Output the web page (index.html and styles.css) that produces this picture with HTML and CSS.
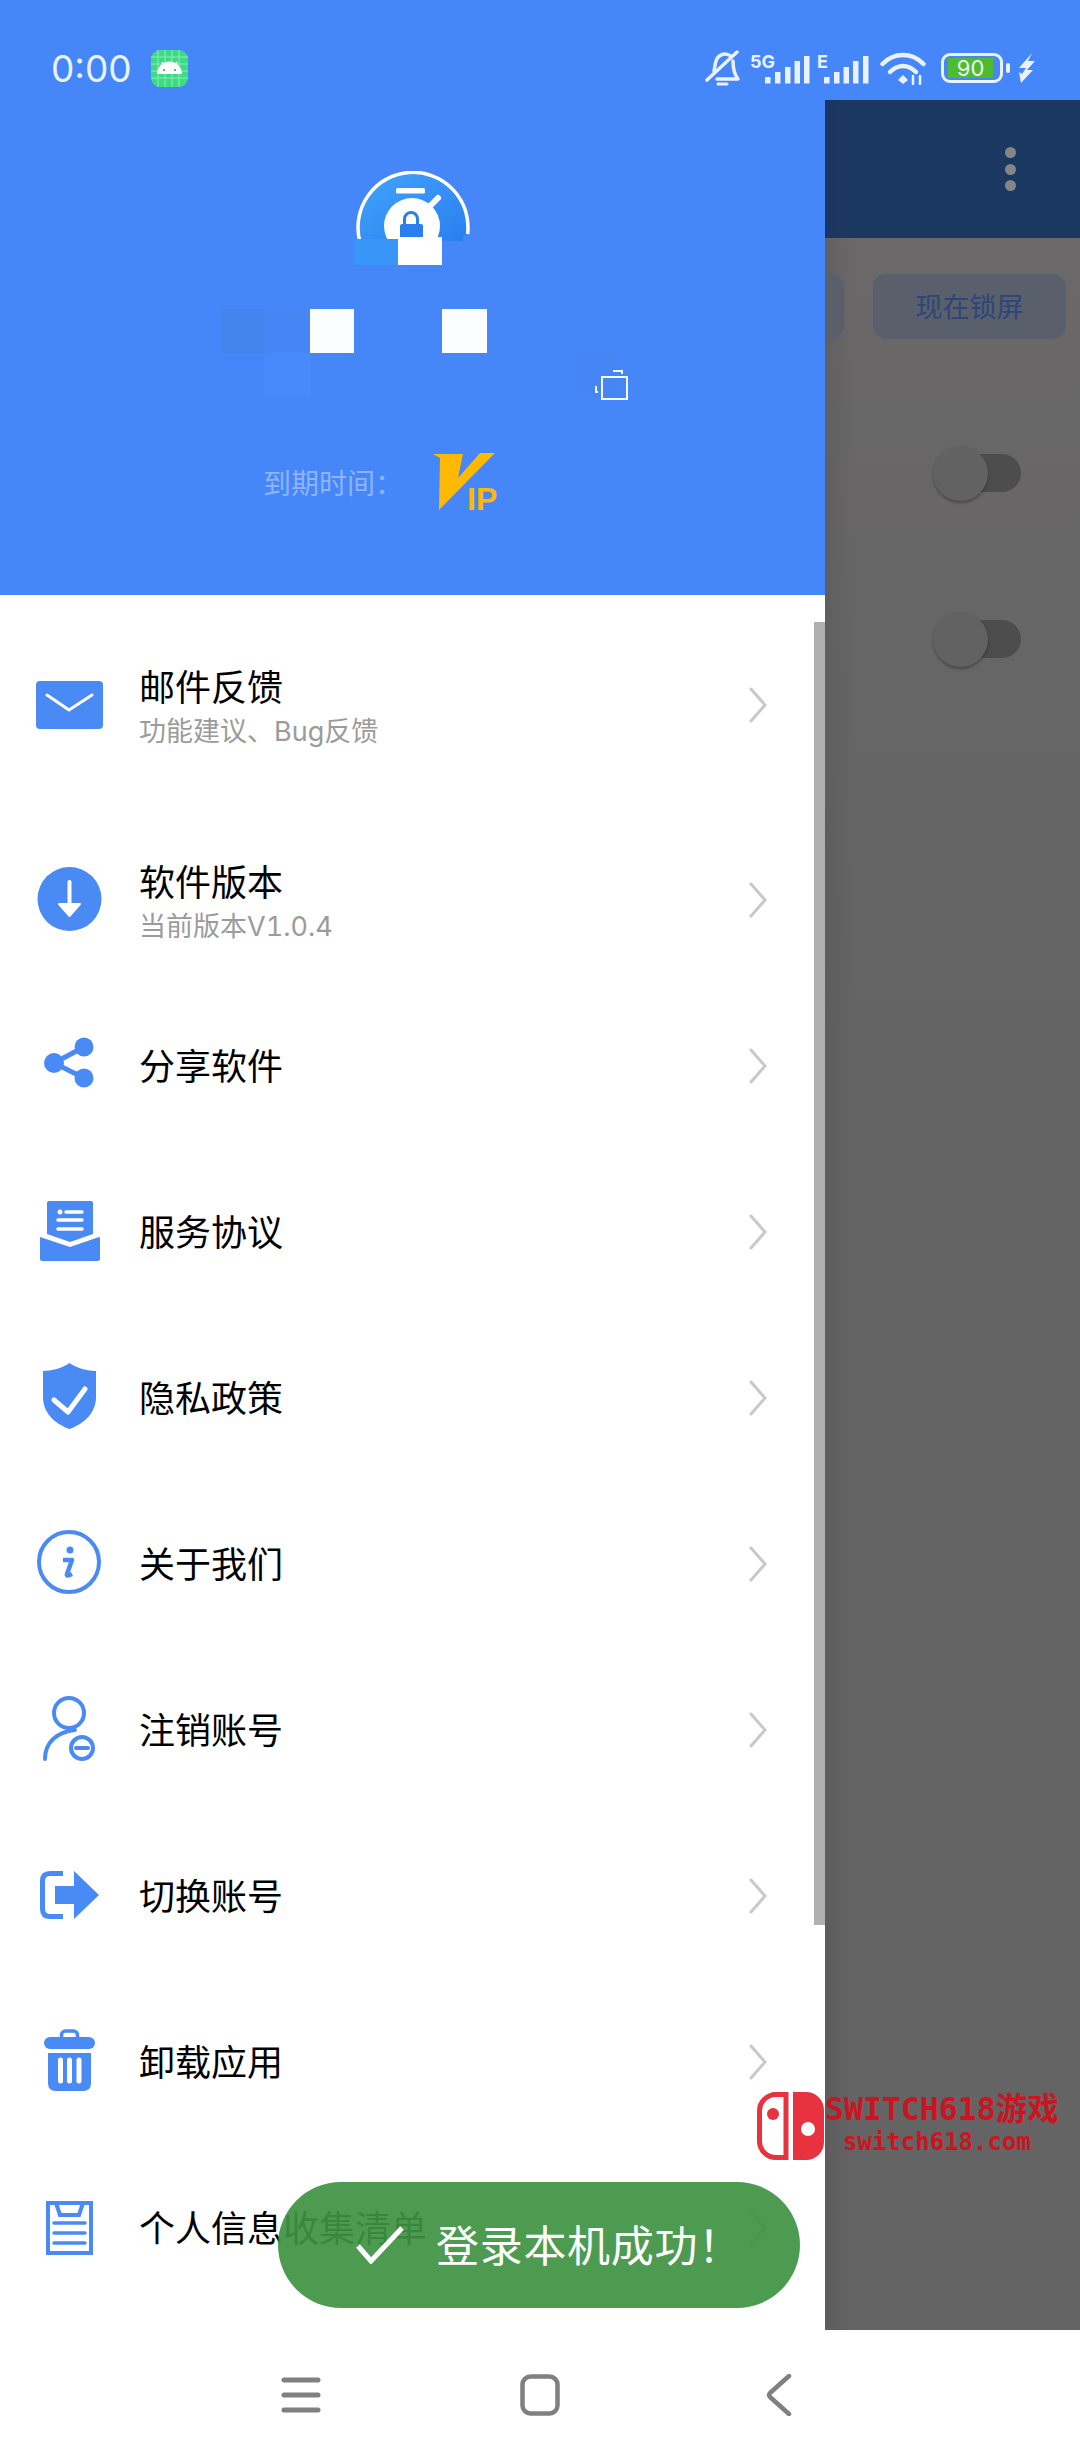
FILE: index.html
```html
<!DOCTYPE html>
<html>
<head>
    <title>Drawer Menu</title>
    <link rel="stylesheet" href="styles.css">
</head>
<body>
    <div class="screen">
        <div class="status-bar">
            <div class="status-left">
                <span class="clock">0:00</span>
                <svg class="app-badge" width="37" height="37" viewBox="0 0 37 37">
                    <rect width="37" height="37" rx="9" fill="#3ddc84"/>
                    <path d="M7 0V37M14 0V37M21 0V37M28 0V37M0 7H37M0 14H37M0 21H37M0 28H37" stroke="#8debb5" stroke-width="1"/>
                    <path d="M6 24a12.500 12.500 0 0 1 25 0z" fill="#fff"/>
                    <path d="M11 12l2.500 4M26 12l-2.500 4" stroke="#fff" stroke-width="1.500"/>
                    <circle cx="13" cy="20" r="1" fill="#2f9d62"/>
                    <circle cx="24" cy="20" r="1" fill="#2f9d62"/>
                </svg>
            </div>
            <div class="status-right">
                <svg width="36" height="38" viewBox="0 0 36 38" fill="none" stroke="#eaf2ff" stroke-width="3.500" stroke-linecap="round" stroke-linejoin="round">
                    <path d="M2 31L32 3"/>
                    <path d="M9 22C10 18 10 15 11 12C12 8 16 5 20 5C22 5 24 6 25 6.500"/>
                    <path d="M28 12C28 19 29 25 33 30H12"/>
                    <path d="M13 35H22" stroke-width="3"/>
                </svg>
                <svg class="signal" width="60" height="34" viewBox="0 0 60 34">
                    <text x="0" y="17.500" class="signal-text">5G</text>
                    <path d="M15 27h5.500v6.500h-5.500zM25 22h5.500v11.500h-5.500zM35 17h5.500v16.500h-5.500zM44.500 11h5.500v22.500h-5.500zM54 6h5.500v27.500h-5.500z" fill="#eaf2ff"/>
                </svg>
                <svg class="signal" width="52" height="34" viewBox="0 0 52 34">
                    <text x="0" y="17.500" class="signal-text">E</text>
                    <path d="M7 27h5.500v6.500h-5.500zM17 22h5.500v11.500h-5.500zM26.500 17h5.500v16.500h-5.500zM36 11h5.500v22.500h-5.500zM46 6h5.500v27.500h-5.500z" fill="#eaf2ff"/>
                </svg>
                <svg class="wifi" width="46" height="34" viewBox="0 0 46 34" fill="none" stroke="#eaf2ff" stroke-width="4.500" stroke-linecap="round">
                    <path d="M2.500 13C14 1 32 1 43.500 13"/>
                    <path d="M10 21C18 13 28 13 36 21"/>
                    <path d="M23 24l5 5-5 4-5-4z" fill="#eaf2ff" stroke="none"/>
                    <path d="M33 25v8M40 25v8" stroke-width="2.500"/>
                </svg>
                <div class="battery">
                    <div class="battery-body"><span class="battery-fill">90</span></div>
                    <div class="battery-tip"></div>
                </div>
                <svg width="18" height="30" viewBox="0 0 18 30">
                    <path d="M14 0L1 15L8 15L4 21L1 19L3 30L15 17L9 17L17 8L10 8z" fill="#eaf2ff"/>
                </svg>
            </div>
        </div>

        <div class="main">
            <div class="drawer">
                <div class="drawer-head">
                    <svg class="logo" width="116" height="95" viewBox="0 0 116 95">
                        <defs>
                            <linearGradient id="logoFill" x1="0" y1="0" x2="1" y2="1">
                                <stop offset="0" stop-color="#42a4fb"/>
                                <stop offset="1" stop-color="#2a7ef0"/>
                            </linearGradient>
                        </defs>
                        <path d="M6 71A55 55 0 1 1 113.600 63L109 65V70H44V71Z" fill="url(#logoFill)"/>
                        <path d="M6 71A55 55 0 1 1 113.600 63" fill="none" stroke="#fff" stroke-width="3.500"/>
                        <rect x="42" y="17" width="29" height="5.500" rx="1.500" fill="#fff"/>
                        <path d="M75 36L84 27" stroke="#fff" stroke-width="6" stroke-linecap="round"/>
                        <circle cx="58" cy="55" r="28" fill="#fff"/>
                        <path d="M50.500 56V48A6.500 6.500 0 0 1 63.500 48V56" fill="none" stroke="#2a7ef0" stroke-width="3"/>
                        <rect x="46" y="53" width="23" height="15" rx="2" fill="#2a7ef0"/>
                        <rect x="0" y="68" width="44" height="26" fill="#3a95f8"/>
                        <rect x="44" y="66" width="44" height="28" fill="#fff"/>
                    </svg>
                    <div class="account">
                        <div class="mosaic">
                            <i class="cell cell-dim"></i><i class="cell cell-faint"></i><i class="cell cell-white"></i><i class="cell"></i><i class="cell"></i><i class="cell cell-white"></i><i class="cell"></i><i class="cell"></i><i class="cell"></i>
                            <i class="cell"></i><i class="cell cell-soft"></i><i class="cell"></i><i class="cell"></i><i class="cell"></i><i class="cell"></i><i class="cell"></i><i class="cell"></i><i class="cell cell-faint"></i>
                        </div>
                        <svg class="copy-icon" width="34" height="32" viewBox="0 0 34 32" fill="none" stroke="#f4f8ff" stroke-width="2">
                            <path d="M7 8H32V30H7Z"/>
                            <path d="M18 2H27V5"/>
                            <path d="M1 17V23H3"/>
                        </svg>
                    </div>
                    <div class="expire">
                        <span class="expire-label">到期时间：</span>
                        <div class="vip">
                            <svg width="64" height="58" viewBox="0 0 64 58">
                                <path d="M0 2H30L25 26L47 1H62L6 58L7 6Z" fill="#ffb900"/>
                            </svg>
                            <span class="vip-text">IP</span>
                        </div>
                    </div>
                </div>

                <div class="menu">
                    <div class="row row-sub">
                        <svg class="row-icon" width="70" height="70" viewBox="0 0 70 70">
                            <rect x="2" y="11" width="67" height="48" rx="4" fill="#4a8af4"/>
                            <path d="M13 25L35 40L58 25" fill="none" stroke="#fff" stroke-width="3" stroke-linecap="round" stroke-linejoin="round"/>
                        </svg>
                        <div class="row-text">
                            <div class="row-title">邮件反馈</div>
                            <div class="row-note">功能建议、Bug反馈</div>
                        </div>
                        <svg class="chevron" width="20" height="36" viewBox="0 0 20 36"><path d="M3 2L17 18L3 34"/></svg>
                    </div>
                    <div class="row">
                        <svg class="row-icon" width="70" height="70" viewBox="0 0 70 70">
                            <circle cx="35.500" cy="34" r="32" fill="#4a8af4"/>
                            <path d="M35.500 17V40" stroke="#fff" stroke-width="4" stroke-linecap="round"/>
                            <path d="M25 39H46L35.500 51Z" fill="#fff" stroke="#fff" stroke-width="2" stroke-linejoin="round"/>
                        </svg>
                        <div class="row-text">
                            <div class="row-title">软件版本</div>
                            <div class="row-note">当前版本V1.0.4</div>
                        </div>
                        <svg class="chevron" width="20" height="36" viewBox="0 0 20 36"><path d="M3 2L17 18L3 34"/></svg>
                    </div>
                    <div class="row">
                        <svg class="row-icon" width="70" height="70" viewBox="0 0 70 70" fill="#4a8af4">
                            <path d="M50 16L20 32L50 47" fill="none" stroke="#4a8af4" stroke-width="5"/>
                            <circle cx="20" cy="32" r="10"/>
                            <circle cx="50" cy="16" r="9.500"/>
                            <circle cx="50" cy="47" r="9.500"/>
                        </svg>
                        <div class="row-title">分享软件</div>
                        <svg class="chevron" width="20" height="36" viewBox="0 0 20 36"><path d="M3 2L17 18L3 34"/></svg>
                    </div>
                    <div class="row">
                        <svg class="row-icon" width="70" height="70" viewBox="0 0 70 70">
                            <path d="M15 4H57Q59 4 59 6V37L36 45L13 37V6Q13 4 15 4Z" fill="#4a8af4"/>
                            <path d="M6 40L36 50L65 40Q66 40 66 42V62Q66 64 64 64H8Q6 64 6 62Z" fill="#4a8af4"/>
                            <circle cx="26" cy="15" r="2.500" fill="#fff"/>
                            <path d="M32 15H48M24 23H48M24 32H48" stroke="#fff" stroke-width="3.500" stroke-linecap="round"/>
                        </svg>
                        <div class="row-title">服务协议</div>
                        <svg class="chevron" width="20" height="36" viewBox="0 0 20 36"><path d="M3 2L17 18L3 34"/></svg>
                    </div>
                    <div class="row">
                        <svg class="row-icon" width="70" height="70" viewBox="0 0 70 70">
                            <path d="M35.500 0C42 5 54 8 62 8V34C62 52 47 62 35.500 66C24 62 9 52 9 34V8C17 8 29 5 35.500 0Z" fill="#4a8af4"/>
                            <path d="M20 37L34 49L51 26" fill="none" stroke="#fff" stroke-width="5" stroke-linecap="round" stroke-linejoin="round"/>
                        </svg>
                        <div class="row-title">隐私政策</div>
                        <svg class="chevron" width="20" height="36" viewBox="0 0 20 36"><path d="M3 2L17 18L3 34"/></svg>
                    </div>
                    <div class="row">
                        <svg class="row-icon" width="70" height="70" viewBox="0 0 70 70">
                            <circle cx="35" cy="33" r="30" fill="none" stroke="#4a8af4" stroke-width="4"/>
                            <circle cx="36" cy="21" r="3.500" fill="#4a8af4"/>
                            <path d="M29 31H38L33 45Q32 48 38 45" fill="none" stroke="#4a8af4" stroke-width="4.500" stroke-linejoin="round"/>
                        </svg>
                        <div class="row-title">关于我们</div>
                        <svg class="chevron" width="20" height="36" viewBox="0 0 20 36"><path d="M3 2L17 18L3 34"/></svg>
                    </div>
                    <div class="row">
                        <svg class="row-icon" width="70" height="70" viewBox="0 0 70 70" fill="none" stroke="#4a8af4" stroke-width="4" stroke-linecap="round">
                            <circle cx="35" cy="18" r="15"/>
                            <path d="M11 64C11 48 22 37 41 35"/>
                            <circle cx="48" cy="53" r="11"/>
                            <path d="M42 53H54"/>
                        </svg>
                        <div class="row-title">注销账号</div>
                        <svg class="chevron" width="20" height="36" viewBox="0 0 20 36"><path d="M3 2L17 18L3 34"/></svg>
                    </div>
                    <div class="row">
                        <svg class="row-icon" width="70" height="70" viewBox="0 0 70 70">
                            <path d="M29 12.500H16Q8.500 12.500 8.500 20V48Q8.500 55.500 16 55.500H29" fill="none" stroke="#4a8af4" stroke-width="5"/>
                            <path d="M21 25H40V10L65 34L40 58V43H21Z" fill="#4a8af4"/>
                        </svg>
                        <div class="row-title">切换账号</div>
                        <svg class="chevron" width="20" height="36" viewBox="0 0 20 36"><path d="M3 2L17 18L3 34"/></svg>
                    </div>
                    <div class="row">
                        <svg class="row-icon" width="70" height="70" viewBox="0 0 70 70">
                            <rect x="27.500" y="4" width="16" height="10" rx="4" fill="none" stroke="#4a8af4" stroke-width="3.500"/>
                            <rect x="10" y="10" width="51" height="12" rx="6" fill="#4a8af4"/>
                            <path d="M14 26H57V56Q57 64 49 64H22Q14 64 14 56Z" fill="#4a8af4"/>
                            <path d="M26.500 33V54M35.500 33V54M45 33V54" stroke="#fff" stroke-width="5" stroke-linecap="round"/>
                        </svg>
                        <div class="row-title">卸载应用</div>
                        <svg class="chevron" width="20" height="36" viewBox="0 0 20 36"><path d="M3 2L17 18L3 34"/></svg>
                    </div>
                    <div class="row">
                        <svg class="row-icon" width="70" height="70" viewBox="0 0 70 70" fill="none" stroke="#4a8af4" stroke-width="4">
                            <rect x="14" y="10" width="43" height="50"/>
                            <path d="M22 10L26 22H45L49 10"/>
                            <path d="M20 30H51M20 40H51M20 50H51" stroke-width="3.500" stroke-linecap="round"/>
                        </svg>
                        <div class="row-title">个人信息收集清单</div>
                        <svg class="chevron" width="20" height="36" viewBox="0 0 20 36"><path d="M3 2L17 18L3 34"/></svg>
                    </div>
                </div>
                <div class="scroll-thumb"></div>
            </div>

            <div class="side">
                <div class="side-bar">
                    <div class="more-dots"><i></i><i></i><i></i></div>
                </div>
                <div class="side-body">
                    <div class="side-buttons">
                        <div class="side-btn"></div>
                        <div class="side-btn">现在锁屏</div>
                    </div>
                    <div class="side-row">
                        <div class="toggle"><div class="thumb"></div><div class="track"></div></div>
                    </div>
                    <div class="side-row">
                        <div class="toggle"><div class="thumb"></div><div class="track"></div></div>
                    </div>
                </div>
            </div>
        </div>

        <div class="nav">
            <div class="nav-item">
                <svg width="40" height="40" viewBox="0 0 40 40"><path d="M3 5H37M3 20H37M3 35H37" fill="none" stroke="#808080" stroke-width="5" stroke-linecap="round"/></svg>
            </div>
            <div class="nav-item">
                <svg width="40" height="42" viewBox="0 0 40 42"><rect x="2.500" y="2.500" width="35" height="37" rx="8" fill="none" stroke="#808080" stroke-width="4.500"/></svg>
            </div>
            <div class="nav-item">
                <svg width="26" height="42" viewBox="0 0 26 42"><path d="M23 2L4 19Q2 21 4 23L23 40" fill="none" stroke="#808080" stroke-width="4.500" stroke-linecap="round"/></svg>
            </div>
        </div>

        <div class="watermark">
            <svg width="68" height="68" viewBox="0 0 68 68">
                <path d="M29 2.500H19A16.500 16.500 0 0 0 2.500 19V49A16.500 16.500 0 0 0 19 65.500H29Z" fill="none" stroke="#e8323f" stroke-width="5"/>
                <circle cx="16" cy="22" r="6" fill="#e8323f"/>
                <path d="M36 0H49A18 18 0 0 1 67 18V50A18 18 0 0 1 49 68H36Z" fill="#e8323f"/>
                <circle cx="51" cy="37" r="7" fill="#fff"/>
            </svg>
            <div class="watermark-text">
                <div class="wm-name">SWITCH618游戏</div>
                <div class="wm-url">switch618.com</div>
            </div>
        </div>

        <div class="toast">
            <svg width="48" height="38" viewBox="0 0 48 38"><path d="M2 20L15 35L46 2" fill="none" stroke="#fff" stroke-width="5"/></svg>
            <span class="toast-text">登录本机成功！</span>
        </div>
    </div>
</body>
</html>
```

FILE: styles.css
```css
* {
    box-sizing: border-box;
}

body {
    margin: 0;
    font-family: Inter, "Noto Sans CJK SC", sans-serif;
    background-color: #fff;
}

.screen {
    position: relative;
    width: 1080px;
    height: 2460px;
    overflow: hidden;
}

/* status bar */
.status-bar {
    position: absolute;
    z-index: 2;
    top: 0;
    left: 0;
    width: 100%;
    height: 136px;
    padding: 0 44px 0 51px;
    display: flex;
    justify-content: space-between;
    align-items: center;
    color: #eaf2ff;
}

.status-left {
    display: flex;
    align-items: center;
    gap: 19px;
}

.clock {
    font-size: 37px;
}

.status-right {
    display: flex;
    align-items: center;
}

.status-right svg {
    display: block;
    flex-shrink: 0;
}

.signal {
    margin: 0 0 3px 9px;
}

.signal + .signal {
    margin-left: 7px;
}

.wifi {
    margin-left: 11px;
}

.signal-text {
    font-size: 18px;
    font-weight: 700;
    fill: #eaf2ff;
}

.battery {
    display: flex;
    align-items: center;
    gap: 3px;
    margin: 0 8px 0 15px;
}

.battery-body {
    width: 62px;
    height: 30px;
    border: 3px solid #eaf2ff;
    border-radius: 9px;
    padding: 2px 7px 2px 4px;
}

.battery-fill {
    display: block;
    height: 100%;
    background-color: #4fbb2e;
    font-size: 22px;
    line-height: 20px;
    text-align: center;
    color: #eaf2ff;
}

.battery-tip {
    width: 4px;
    height: 10px;
    border-radius: 2px;
    background-color: #eaf2ff;
}

/* main area */
.main {
    display: flex;
    height: 2330px;
}

.drawer {
    position: relative;
    width: 825px;
    flex-shrink: 0;
    background-color: #fff;
}

.drawer-head {
    height: 595px;
    padding-top: 171px;
    background-color: #4587f9;
}

.logo {
    display: block;
    margin-left: 354px;
}

.account {
    position: relative;
    margin: 43px 0 0 221px;
    width: 399px;
}

.mosaic {
    display: grid;
    grid-template-columns: repeat(9, 44.3px);
    grid-auto-rows: 44px;
}

.cell-white {
    background-color: #fbfdff;
}

.cell-dim {
    background-color: #4484ee;
}

.cell-faint {
    background-color: #4585f4;
}

.cell-soft {
    background-color: #4889fb;
}

.copy-icon {
    position: absolute;
    top: 60px;
    left: 374px;
}

.expire {
    display: flex;
    align-items: center;
    margin: 55px 0 0 263px;
    height: 58px;
}

.expire-label {
    width: 170px;
    padding-top: 2px;
    font-size: 28px;
    color: #8fb4fa;
}

.vip {
    position: relative;
    width: 64px;
    height: 58px;
}

.vip svg {
    display: block;
}

.vip-text {
    position: absolute;
    left: 34px;
    top: 29px;
    font-family: "Liberation Sans", sans-serif;
    font-size: 32px;
    font-weight: 700;
    line-height: 36px;
    color: #ffb900;
}

.menu {
    padding-top: 27px;
}

.row {
    display: flex;
    align-items: center;
    height: 166px;
    padding: 0 57px 0 34px;
}

.row-sub {
    margin-bottom: 29px;
}

.row-icon {
    flex-shrink: 0;
    margin-right: 35px;
}

.row-text {
    display: flex;
    flex-direction: column;
    padding-top: 9px;
}

.row-title {
    font-size: 36px;
    line-height: 44px;
    color: #000;
}

.row > .row-title {
    padding-top: 2px;
}

.row-note {
    font-size: 27px;
    line-height: 44px;
    color: #9b9b9b;
    font-feature-settings: "tnum";
}

.chevron {
    margin-left: auto;
    flex-shrink: 0;
    fill: none;
    stroke: #c9c9c9;
    stroke-width: 3;
    stroke-linecap: round;
}

.scroll-thumb {
    position: absolute;
    top: 622px;
    right: 0;
    width: 11px;
    height: 1303px;
    background-color: #b0b0b0;
}

/* dimmed page behind the drawer */
.side {
    flex: 1;
    min-width: 0;
    display: flex;
    flex-direction: column;
    padding-top: 100px;
    background-color: #4587f9;
}

.side-bar {
    height: 138px;
    display: flex;
    align-items: center;
    justify-content: flex-end;
    padding-right: 64px;
    background: linear-gradient(90deg, #1a3560, #1b3863 30px);
}

.more-dots {
    display: flex;
    flex-direction: column;
    gap: 5.5px;
}

.more-dots i {
    display: block;
    width: 11px;
    height: 11px;
    border-radius: 50%;
    background-color: #858585;
}

.side-body {
    flex: 1;
    padding-top: 36px;
    background:
        linear-gradient(90deg, rgba(0, 0, 0, 0.08), rgba(0, 0, 0, 0) 30px),
        linear-gradient(#6a6868, #646464 800px);
}

.side-buttons {
    display: flex;
    justify-content: flex-end;
    gap: 29px;
    padding-right: 14px;
    overflow: hidden;
}

.side-btn {
    flex-shrink: 0;
    width: 193px;
    height: 65px;
    border-radius: 14px;
    background-color: #595f6b;
    font-size: 27px;
    line-height: 68px;
    text-align: center;
    color: #2c4679;
}

.side-row {
    display: flex;
    align-items: center;
    justify-content: flex-end;
    height: 166px;
    padding-right: 59px;
}

.side-buttons + .side-row {
    margin-top: 51px;
}

.toggle {
    display: flex;
    align-items: center;
}

.thumb {
    position: relative;
    z-index: 1;
    width: 55px;
    height: 55px;
    border-radius: 50%;
    background-color: #626262;
    box-shadow: 0 2px 3px rgba(0, 0, 0, 0.3);
}

.track {
    width: 61px;
    height: 38px;
    margin-left: -28px;
    border-radius: 19px;
    background-color: #4d4d4d;
}

/* bottom navigation */
.nav {
    height: 130px;
    display: flex;
    justify-content: center;
    background-color: #fff;
}

.nav-item {
    width: 239px;
    display: flex;
    align-items: center;
    justify-content: center;
}

/* overlays */
.watermark {
    position: absolute;
    left: 757px;
    top: 2092px;
    display: flex;
}

.watermark-text {
    color: #cb1420;
    font-family: "DejaVu Sans Mono", "Noto Sans CJK SC", monospace;
    font-weight: 700;
}

.wm-name {
    font-size: 31.5px;
    line-height: 34px;
    white-space: nowrap;
}

.wm-url {
    font-size: 24px;
    line-height: 32px;
    margin-left: 18px;
}

.toast {
    position: absolute;
    left: 278px;
    top: 2182px;
    width: 522px;
    height: 126px;
    padding-left: 78px;
    display: flex;
    align-items: center;
    gap: 32px;
    border-radius: 63px;
    background-color: rgba(62, 147, 66, 0.92);
}

.toast-text {
    padding-bottom: 5px;
    font-size: 43px;
    letter-spacing: 0.7px;
    color: #fff;
    white-space: nowrap;
}
```
